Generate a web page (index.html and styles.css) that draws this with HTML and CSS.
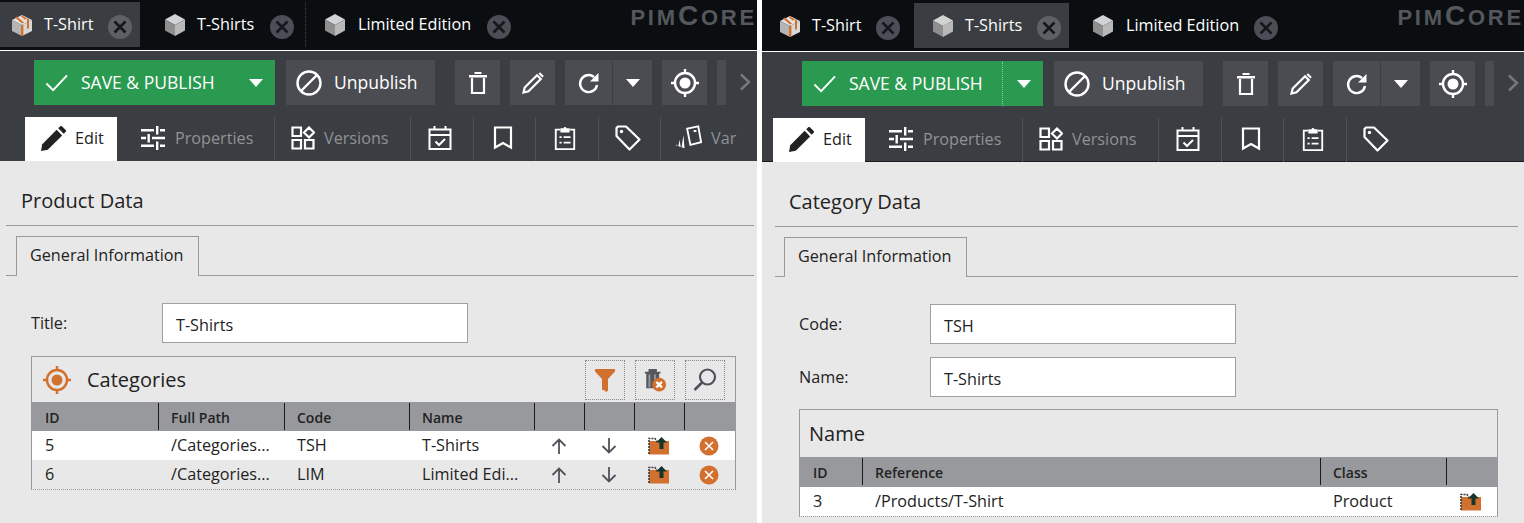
FILE: index.html
```html
<!DOCTYPE html>
<html>
<head>
  <title>Pimcore - Product and Category</title>
  <link rel="stylesheet" href="styles.css">
</head>
<body>
  <svg class="icon-defs" xmlns="http://www.w3.org/2000/svg">
    <symbol id="i-cube" viewBox="0 0 24 24">
      <path fill="#d2d2d2" d="M12 1l10 5.500L12 12 2 6.500z"/>
      <path fill="#8e8e8e" d="M2 6.500L12 12v11L2 17.500z"/>
      <path fill="#b9b9b9" d="M22 6.500L12 12v11l10-5.500z"/>
    </symbol>
    <symbol id="i-gift" viewBox="0 0 24 24">
      <path fill="#e2e2e2" d="M12 2l10 5L12 12 2 7z"/>
      <path fill="#b5b5b5" d="M2 7l10 5v11L2 18z"/>
      <path fill="#d8d8d8" d="M22 7L12 12v11l10-5z"/>
      <path fill="#d2702f" d="M11 12h2.400v11H11zM5 4.500L7 3.500l7 6-2 1zM10 2.500h2l5 3-2 1.200z"/>
      <path fill="#d2702f" d="M17 5.500h2V15l-2 1z"/>
    </symbol>
    <symbol id="i-close" viewBox="0 0 24 24">
      <circle cx="12" cy="12" r="12" fill="currentColor"/>
      <path stroke="#15171a" stroke-width="2.600" d="M6.500 6.500l11 11M17.500 6.500l-11 11"/>
    </symbol>
    <symbol id="i-check" viewBox="0 0 24 24">
      <path fill="none" stroke="#fff" stroke-width="2" d="M1.500 13l7 7L23 4.500"/>
    </symbol>
    <symbol id="i-caret" viewBox="0 0 16 10">
      <path fill="#fff" d="M1 1h14L8 9z"/>
    </symbol>
    <symbol id="i-ban" viewBox="0 0 26 26">
      <circle cx="13" cy="13" r="11.500" fill="none" stroke="#fff" stroke-width="2.400"/>
      <path stroke="#fff" stroke-width="2.400" d="M21 5L5 21"/>
    </symbol>
    <symbol id="i-trash" viewBox="0 0 20 24">
      <path fill="none" stroke="#fff" stroke-width="2.200" d="M4 7v15h12V7"/>
      <path fill="#fff" d="M1 4h18v2.400H1zM6.500 1h7v2h-7z"/>
    </symbol>
    <symbol id="i-pencil" viewBox="0 0 24 24">
      <path fill="none" stroke="#fff" stroke-width="2.200" d="M2.500 21.500l1.200-5L16 4.200l3.800 3.800L7.500 20.300z"/>
      <path fill="#fff" d="M17.500 2.700l1.500-1.500 3.800 3.800-1.500 1.500z"/>
    </symbol>
    <symbol id="i-refresh" viewBox="0 0 24 24">
      <path fill="none" stroke="#fff" stroke-width="2.400" d="M20 14a8.500 8.500 0 1 1-3-8"/>
      <path fill="#fff" d="M21.500 2v8.500H13z"/>
    </symbol>
    <symbol id="i-locate" viewBox="0 0 28 28">
      <circle cx="14" cy="14" r="10" fill="none" stroke="currentColor" stroke-width="2.400"/>
      <circle cx="14" cy="14" r="5.500" fill="currentColor"/>
      <path stroke="currentColor" stroke-width="2.400" d="M14 0v5M14 23v5M0 14h5M23 14h5"/>
    </symbol>
    <symbol id="i-chevron" viewBox="0 0 12 18">
      <path fill="none" stroke="#77797d" stroke-width="2.400" d="M2 1.500L10 9l-8 7.500"/>
    </symbol>
    <symbol id="i-edit" viewBox="0 0 24 24">
      <path fill="currentColor" d="M0 24l1.200-6.500L15 3.700l5.300 5.300L6.500 22.800z"/>
      <path fill="currentColor" d="M16.500 2.200L18.500.300a1.200 1.200 0 0 1 1.600 0l3.600 3.600a1.200 1.200 0 0 1 0 1.600l-1.900 2z"/>
    </symbol>
    <symbol id="i-sliders" viewBox="0 0 24 24">
      <path fill="#fff" d="M0 3h13v2.400H0zM19 3h5v2.400h-5zM15 0h2.400v8.500H15zM0 10.800h5v2.400H0zM11 10.800h13v2.400H11zM6.500 8h2.400v8.400H6.500zM0 18.600h13V21H0zM19 18.600h5V21h-5zM15 15.500h2.400V24H15z"/>
    </symbol>
    <symbol id="i-shapes" viewBox="0 0 24 24">
      <path fill="none" stroke="#fff" stroke-width="2.200" d="M1.500 1.500h8.500V10H1.500zM1.500 14h8.500v8.500H1.500zM14 14h8.500v8.500H14zM18 1.500L23 6.500l-5 5-5-5z"/>
    </symbol>
    <symbol id="i-calendar" viewBox="0 0 24 24">
      <path fill="none" stroke="#fff" stroke-width="2" d="M1.500 3.500h21v19.500h-21zM1.500 9h21M6.500 0v4M17.500 0v4M7.500 15.500l3.500 3.500 6-6"/>
    </symbol>
    <symbol id="i-bookmark" viewBox="0 0 20 24">
      <path fill="none" stroke="#fff" stroke-width="2.200" d="M2 1.500h16v20l-8-4.500-8 4.500z"/>
    </symbol>
    <symbol id="i-clipboard" viewBox="0 0 24 26">
      <path fill="none" stroke="#fff" stroke-width="2" d="M7 4H2v21h20V4h-5"/>
      <path fill="#fff" d="M7 2.500h3.500a1.500 1.500 0 0 1 3 0H17V7H7zM6 11h2.400v2H6zM10.500 11H18v2h-7.500zM6 17h2.400v2H6zM10.500 17H18v2h-7.500z"/>
    </symbol>
    <symbol id="i-tag" viewBox="0 0 26 26">
      <path fill="none" stroke="#fff" stroke-width="2.200" stroke-linejoin="round" d="M1.500 3v8l13 13.500L24.500 14.500 11 1.500H3z"/>
      <circle cx="6.500" cy="6.500" r="1.700" fill="#fff"/>
    </symbol>
    <symbol id="i-cards" viewBox="0 0 28 26">
      <path fill="none" stroke="#fff" stroke-width="2" d="M12 3l12-2.500 3 17-11.500 3z"/>
      <path fill="#fff" d="M8 10l1.200 14L6 23zM4 15l1 8-2.500-1.500zM1 20l.6 1.500L0 21zM19 4.500h3v2h-3z"/>
    </symbol>
    <symbol id="i-filter" viewBox="0 0 22 24">
      <path fill="#d2702f" d="M1 1h20v2.500l-7 7.500v11a1.800 1.800 0 0 1-3.600 0H8V11L1 3.500z"/>
    </symbol>
    <symbol id="i-trash-x" viewBox="0 0 26 26">
      <path fill="#55585f" d="M2 4h17v2H2zM6 1h9v3H6zM3.500 6h14v16h-14z"/>
      <path fill="#9a9a9a" d="M6 7h2v14H6zM12 7h2v14h-2z"/>
      <circle cx="17.500" cy="18" r="7.500" fill="#d2702f"/>
      <path stroke="#fff" stroke-width="2.400" d="M14.500 15l6 6M20.500 15l-6 6"/>
    </symbol>
    <symbol id="i-search" viewBox="0 0 24 24">
      <circle cx="14.500" cy="9" r="7.500" fill="none" stroke="#4f525a" stroke-width="2.200"/>
      <path stroke="#4f525a" stroke-width="2.600" d="M9 14.500L1.500 22"/>
    </symbol>
    <symbol id="i-up" viewBox="0 0 16 16">
      <path fill="none" stroke="#4f525a" stroke-width="1.800" d="M8 16V1.500M1.500 8L8 1.500 14.500 8"/>
    </symbol>
    <symbol id="i-down" viewBox="0 0 16 16">
      <path fill="none" stroke="#4f525a" stroke-width="1.800" d="M8 0v14.500M1.500 8L8 14.500 14.500 8"/>
    </symbol>
    <symbol id="i-folder" viewBox="0 0 22 18">
      <path fill="#d2702f" d="M1 4h20v13.500H1z"/>
      <path fill="none" stroke="#3b3b3b" stroke-width="1.600" stroke-dasharray="2 1" d="M1 17V1.500h6l2 3"/>
      <path fill="#16352a" d="M13.500 0l5.500 5.500h-3.500V12h-4V5.500H8z"/>
    </symbol>
    <symbol id="i-remove" viewBox="0 0 20 20">
      <circle cx="10" cy="10" r="9.500" fill="#d2702f"/>
      <path stroke="#fff" stroke-width="1.600" d="M6 6l8 8M14 6l-8 8"/>
    </symbol>
  </svg>

  <div class="panels">
    <!-- product -->
    <div class="panel panel-left">
      <div class="topbar">
        <div class="tab tab-a active">
          <svg class="tab-icon"><use href="#i-gift"/></svg>
          <span>T-Shirt</span>
          <svg class="tab-close"><use href="#i-close"/></svg>
        </div>
        <div class="tab tab-b dotted">
          <svg class="tab-icon"><use href="#i-cube"/></svg>
          <span>T-Shirts</span>
          <svg class="tab-close"><use href="#i-close"/></svg>
        </div>
        <div class="tab tab-c">
          <svg class="tab-icon"><use href="#i-cube"/></svg>
          <span>Limited Edition</span>
          <svg class="tab-close"><use href="#i-close"/></svg>
        </div>
        <div class="logo">PIM<span class="logo-c">C</span>ORE</div>
      </div>

      <div class="toolbar">
        <div class="actions">
          <div class="btn btn-save">
            <svg class="ico-check"><use href="#i-check"/></svg>
            <span class="btn-label">SAVE &amp; PUBLISH</span>
            <svg class="ico-caret save-caret"><use href="#i-caret"/></svg>
          </div>
          <div class="btn btn-unpublish">
            <svg class="ico-ban"><use href="#i-ban"/></svg>
            <span class="btn-label">Unpublish</span>
          </div>
          <div class="btn btn-icon first-icon"><svg class="ico-trash"><use href="#i-trash"/></svg></div>
          <div class="btn btn-icon"><svg class="ico-24"><use href="#i-pencil"/></svg></div>
          <div class="btn btn-refresh"><svg class="ico-24"><use href="#i-refresh"/></svg></div>
          <div class="btn btn-more"><svg class="ico-caret"><use href="#i-caret"/></svg></div>
          <div class="btn btn-icon"><svg class="ico-locate"><use href="#i-locate"/></svg></div>
          <div class="btn btn-stub"></div>
          <svg class="ico-chevron"><use href="#i-chevron"/></svg>
        </div>
        <div class="subtabs">
          <div class="subtab subtab-edit"><svg class="ico-edit"><use href="#i-edit"/></svg><span>Edit</span></div>
          <div class="subtab subtab-props"><svg class="ico-24"><use href="#i-sliders"/></svg><span>Properties</span></div>
          <div class="subtab subtab-versions"><svg class="ico-24"><use href="#i-shapes"/></svg><span>Versions</span></div>
          <div class="subtab subtab-only sep"><svg class="ico-24"><use href="#i-calendar"/></svg></div>
          <div class="subtab subtab-only sep"><svg class="ico-24"><use href="#i-bookmark"/></svg></div>
          <div class="subtab subtab-only sep"><svg class="ico-24"><use href="#i-clipboard"/></svg></div>
          <div class="subtab subtab-only sep"><svg class="ico-26"><use href="#i-tag"/></svg></div>
          <div class="subtab subtab-var"><svg class="ico-26"><use href="#i-cards"/></svg><span>Var</span></div>
        </div>
      </div>

      <div class="content">
        <div class="section-title">Product Data</div>
        <div class="form-tabs"><div class="form-tab">General Information</div></div>
        <div class="form-body">
          <div class="field">
            <label>Title:</label>
            <div class="input">T-Shirts</div>
          </div>
          <div class="relation relation-product">
            <div class="relation-head">
              <svg class="ico-locate head-locate"><use href="#i-locate"/></svg>
              <span class="relation-title">Categories</span>
              <div class="head-tools">
                <div class="head-tool"><svg class="ico-tool"><use href="#i-filter"/></svg></div>
                <div class="head-tool"><svg class="ico-tool"><use href="#i-trash-x"/></svg></div>
                <div class="head-tool"><svg class="ico-tool"><use href="#i-search"/></svg></div>
              </div>
            </div>
            <div class="grid-row grid-header">
              <div class="cell">ID</div><div class="cell">Full Path</div><div class="cell">Code</div><div class="cell">Name</div>
              <div class="cell"></div><div class="cell"></div><div class="cell"></div><div class="cell"></div>
            </div>
            <div class="grid-row row-white">
              <div class="cell">5</div><div class="cell">/Categories...</div><div class="cell">TSH</div><div class="cell">T-Shirts</div>
              <div class="cell cell-icon"><svg class="ico-arrow"><use href="#i-up"/></svg></div>
              <div class="cell cell-icon"><svg class="ico-arrow"><use href="#i-down"/></svg></div>
              <div class="cell cell-icon"><svg class="ico-folder"><use href="#i-folder"/></svg></div>
              <div class="cell cell-icon"><svg class="ico-remove"><use href="#i-remove"/></svg></div>
            </div>
            <div class="grid-row">
              <div class="cell">6</div><div class="cell">/Categories...</div><div class="cell">LIM</div><div class="cell">Limited Edi...</div>
              <div class="cell cell-icon"><svg class="ico-arrow"><use href="#i-up"/></svg></div>
              <div class="cell cell-icon"><svg class="ico-arrow"><use href="#i-down"/></svg></div>
              <div class="cell cell-icon"><svg class="ico-folder"><use href="#i-folder"/></svg></div>
              <div class="cell cell-icon"><svg class="ico-remove"><use href="#i-remove"/></svg></div>
            </div>
          </div>
        </div>
      </div>
    </div>

    <!-- category -->
    <div class="panel panel-right">
      <div class="topbar">
        <div class="tab tab-a">
          <svg class="tab-icon"><use href="#i-gift"/></svg>
          <span>T-Shirt</span>
          <svg class="tab-close"><use href="#i-close"/></svg>
        </div>
        <div class="tab tab-b active">
          <svg class="tab-icon"><use href="#i-cube"/></svg>
          <span>T-Shirts</span>
          <svg class="tab-close"><use href="#i-close"/></svg>
        </div>
        <div class="tab tab-c">
          <svg class="tab-icon"><use href="#i-cube"/></svg>
          <span>Limited Edition</span>
          <svg class="tab-close"><use href="#i-close"/></svg>
        </div>
        <div class="logo">PIM<span class="logo-c">C</span>ORE</div>
      </div>

      <div class="toolbar">
        <div class="actions">
          <div class="btn btn-save">
            <svg class="ico-check"><use href="#i-check"/></svg>
            <span class="btn-label">SAVE &amp; PUBLISH</span>
            <svg class="ico-caret save-caret"><use href="#i-caret"/></svg>
          </div>
          <div class="btn btn-unpublish">
            <svg class="ico-ban"><use href="#i-ban"/></svg>
            <span class="btn-label">Unpublish</span>
          </div>
          <div class="btn btn-icon first-icon"><svg class="ico-trash"><use href="#i-trash"/></svg></div>
          <div class="btn btn-icon"><svg class="ico-24"><use href="#i-pencil"/></svg></div>
          <div class="btn btn-refresh"><svg class="ico-24"><use href="#i-refresh"/></svg></div>
          <div class="btn btn-more"><svg class="ico-caret"><use href="#i-caret"/></svg></div>
          <div class="btn btn-icon"><svg class="ico-locate"><use href="#i-locate"/></svg></div>
          <div class="btn btn-stub"></div>
          <svg class="ico-chevron"><use href="#i-chevron"/></svg>
        </div>
        <div class="subtabs">
          <div class="subtab subtab-edit"><svg class="ico-edit"><use href="#i-edit"/></svg><span>Edit</span></div>
          <div class="subtab subtab-props"><svg class="ico-24"><use href="#i-sliders"/></svg><span>Properties</span></div>
          <div class="subtab subtab-versions"><svg class="ico-24"><use href="#i-shapes"/></svg><span>Versions</span></div>
          <div class="subtab subtab-only sep"><svg class="ico-24"><use href="#i-calendar"/></svg></div>
          <div class="subtab subtab-only sep"><svg class="ico-24"><use href="#i-bookmark"/></svg></div>
          <div class="subtab subtab-only sep"><svg class="ico-24"><use href="#i-clipboard"/></svg></div>
          <div class="subtab subtab-only"><svg class="ico-26"><use href="#i-tag"/></svg></div>
        </div>
      </div>

      <div class="content">
        <div class="section-title">Category Data</div>
        <div class="form-tabs"><div class="form-tab">General Information</div></div>
        <div class="form-body">
          <div class="field">
            <label>Code:</label>
            <div class="input">TSH</div>
          </div>
          <div class="field field-last">
            <label>Name:</label>
            <div class="input">T-Shirts</div>
          </div>
          <div class="relation relation-category">
            <div class="relation-head">
              <span class="relation-title">Name</span>
            </div>
            <div class="grid-row grid-header">
              <div class="cell">ID</div><div class="cell">Reference</div><div class="cell">Class</div><div class="cell"></div>
            </div>
            <div class="grid-row row-white">
              <div class="cell">3</div><div class="cell">/Products/T-Shirt</div><div class="cell">Product</div>
              <div class="cell cell-icon"><svg class="ico-folder"><use href="#i-folder"/></svg></div>
            </div>
          </div>
        </div>
      </div>
    </div>
  </div>
</body>
</html>
```

FILE: styles.css
```css
html, body {
  height: 523px;
  margin: 0;
  overflow: hidden;
}

body {
  background-color: #fff;
  color: #222;
  font-family: "Open Sans", sans-serif;
  font-size: 16.200px;
}

.icon-defs {
  display: none;
}

svg {
  display: block;
  flex: none;
}

.panels {
  display: flex;
  gap: 5px;
  height: 523px;
}

.panel {
  display: flex;
  flex-direction: column;
  overflow: hidden;
}

.panel-left {
  width: 757px;
}

.panel-right {
  flex: 1;
}

/* top tabs */
.topbar {
  display: flex;
  flex: none;
  height: 50px;
  background-color: #0b0e11;
  border-bottom: 1px solid #fff;
  color: #fff;
}

.panel-right .topbar {
  height: 51px;
  padding-left: 6px;
}

.tab {
  display: flex;
  align-items: center;
  box-sizing: border-box;
  height: 45px;
  margin-top: 2px;
  color: #4b4e56;
}

.panel-right .tab {
  margin-top: 3px;
}

.tab span {
  margin-bottom: 2px;
  color: #fff;
}

.tab.active {
  background-color: #3a3d41;
  color: #5d6065;
}

.tab.dotted {
  border-right: 1px dotted #3d4045;
}

.tab-icon {
  width: 24px;
  height: 28px;
  margin-right: 10px;
}

.tab-c .tab-icon {
  margin-right: 11px;
}

.tab-close {
  width: 24px;
  height: 24px;
  margin-top: 5px;
  margin-left: auto;
}

.panel-left .tab-a {
  width: 140px;
  padding: 0 8px 0 10px;
}

.panel-left .tab-b {
  width: 166px;
  padding: 0 11px 0 23px;
}

.panel-left .tab-c {
  width: 213px;
  padding: 0 8px 0 17px;
}

.panel-right .tab-a {
  width: 146px;
  padding: 0 14px 0 10px;
}

.panel-right .tab-b {
  width: 155px;
  padding: 0 8px 0 17px;
}

.panel-right .tab-c {
  width: 217px;
  padding: 0 8px 0 22px;
}

.logo {
  flex: none;
  margin-top: 3px;
  margin-left: auto;
  color: #55575c;
  font-family: "Liberation Sans", sans-serif;
  font-size: 22px;
  font-weight: bold;
  letter-spacing: 2.800px;
  line-height: 30px;
  white-space: nowrap;
}

.logo-c {
  font-size: 28px;
  line-height: 20px;
}

/* dark toolbar */
.toolbar {
  flex: none;
  height: 110px;
  background-color: #3a3d41;
  color: #fff;
}

.panel-right .toolbar {
  border-bottom: 1px solid #1a1c1f;
  height: 109px;
}

.actions {
  display: flex;
  height: 45px;
  padding-top: 9px;
  padding-left: 34px;
}

.panel-right .actions {
  padding-left: 40px;
}

.btn {
  display: flex;
  align-items: center;
  justify-content: center;
  box-sizing: border-box;
  width: 45px;
  height: 45px;
  margin-left: 10px;
  background-color: #4a4c52;
}

.btn-label {
  margin-bottom: 2px;
  font-size: 17.500px;
}

.btn-save {
  justify-content: flex-start;
  width: 241px;
  margin-left: 0;
  padding-left: 11px;
  background-color: #2a9a50;
}

.panel-right .save-caret {
  border-left: 1px dotted #8ac79f;
  box-sizing: content-box;
  padding: 17px 11px 17px 13px;
  margin-left: 19px;
}

.ico-check {
  width: 23px;
  height: 23px;
  margin-right: 13px;
}

.save-caret {
  margin-left: 33px;
}

.ico-caret {
  width: 16px;
  height: 10px;
}

.btn-unpublish {
  justify-content: flex-start;
  width: 149px;
  margin-left: 11px;
  padding-left: 10px;
}

.ico-ban {
  width: 26px;
  height: 26px;
  margin-right: 12px;
}

.first-icon {
  margin-left: 20px;
}

.btn-refresh {
  width: 47px;
}

.btn-more {
  width: 40px;
  margin-left: 0;
  border-left: 1px solid #3a3d41;
}

.btn-stub {
  width: 9px;
}

.ico-trash {
  width: 20px;
  height: 24px;
}

.ico-24 {
  width: 24px;
  height: 24px;
}

.ico-26 {
  width: 26px;
  height: 26px;
}

.ico-locate {
  width: 28px;
  height: 28px;
  color: #fff;
}

.ico-chevron {
  width: 12px;
  height: 18px;
  margin: 13px 0 0 13px;
}

.subtabs {
  display: flex;
  height: 44px;
  margin-top: 12px;
  padding-left: 25px;
}

.panel-right .subtabs {
  padding-left: 11px;
}

.subtab {
  display: flex;
  align-items: center;
  box-sizing: border-box;
  height: 44px;
  padding-bottom: 2px;
  color: #909296;
}

.subtab-edit {
  width: 92px;
  padding-left: 16px;
  background-color: #fff;
  color: #222;
}

.ico-edit {
  width: 25px;
  height: 25px;
  margin-right: 9px;
}

.subtab-props {
  width: 158px;
  padding-left: 24px;
  border-right: 1px solid #4f5257;
}

.subtab-props svg {
  margin-right: 10px;
}

.subtab-versions {
  width: 136px;
  padding-left: 16px;
  border-right: 1px solid #4f5257;
}

.subtab-versions svg {
  margin-right: 9px;
}

.subtab-only {
  justify-content: center;
  width: 62.500px;
  padding-right: 3px;
}

.subtab-only.sep {
  border-right: 1px solid #4f5257;
}

.subtab-var {
  padding-left: 15px;
}

.subtab-var svg {
  margin-right: 9px;
}

/* page body */
.content {
  flex: 1;
  padding: 0 3px 0 6px;
  background-color: #e8e8e8;
}

.panel-right .content {
  padding-left: 13px;
  padding-right: 6px;
}

.section-title {
  box-sizing: border-box;
  height: 65px;
  padding: 26px 0 0 15px;
  border-bottom: 1px solid #9a9a9a;
  font-size: 20px;
  line-height: 28px;
}

.panel-right .section-title {
  padding-left: 14px;
}

.form-tabs {
  display: flex;
  height: 39px;
  margin-top: 10px;
  padding-left: 10px;
  border-bottom: 1px solid #9a9a9a;
}

.panel-right .form-tabs {
  padding-left: 9px;
}

.form-tab {
  box-sizing: border-box;
  width: 183px;
  height: 40px;
  padding-left: 13px;
  border: 1px solid #9a9a9a;
  border-bottom: none;
  background-color: #e8e8e8;
  line-height: 37px;
}

.form-body {
  padding: 27px 0 0 25px;
}

.panel-right .form-body {
  padding-left: 24px;
}

.field {
  display: flex;
  height: 40px;
  margin-bottom: 13px;
}

.field-last {
  margin-bottom: 12px;
}

.field label {
  flex: none;
  width: 131px;
  line-height: 40px;
}

.input {
  box-sizing: border-box;
  width: 306px;
  height: 40px;
  padding: 1px 0 0 13px;
  border: 1px solid #a0a0a0;
  background-color: #fff;
  line-height: 40px;
}

.relation {
  box-sizing: border-box;
  border: 1px solid #9a9a9a;
  border-bottom-style: dotted;
}

.relation-product {
  width: 705px;
}

.relation-category {
  width: 699px;
}

.relation-head {
  display: flex;
  align-items: center;
  box-sizing: border-box;
  height: 45px;
  padding: 0 10px 0 11px;
}

.relation-category .relation-head {
  height: 47px;
  padding-left: 9px;
}

.relation-title {
  margin-bottom: 1px;
  font-size: 20px;
}

.head-locate {
  margin-right: 16px;
  color: #d2702f;
}

.head-tools {
  display: flex;
  gap: 10px;
  margin-left: auto;
}

.head-tool {
  display: flex;
  align-items: center;
  justify-content: center;
  width: 38px;
  height: 38px;
  border: 1px dotted #8a8a8a;
}

.ico-tool {
  width: 24px;
  height: 24px;
}

.grid-row {
  display: grid;
  height: 29px;
  line-height: 29px;
}

.relation-product .grid-row {
  grid-template-columns: 127px 126px 125px 125px 50px 50px 50px 1fr;
}

.relation-category .grid-row {
  grid-template-columns: 63px 458px 126px 1fr;
}

.relation-category .grid-header {
  height: 30px;
}

.cell {
  box-sizing: border-box;
  padding-left: 12px;
  white-space: nowrap;
  overflow: hidden;
}

.cell:first-child {
  padding-left: 13px;
}

.grid-header {
  background-color: #98999d;
  font-size: 14px;
  font-weight: 600;
}

.grid-header .cell:not(:last-child) {
  height: 27px;
  margin-top: 1px;
  border-right: 1px solid #1a1a1a;
}

.row-white {
  background-color: #fff;
}

.cell-icon {
  display: flex;
  align-items: center;
  justify-content: center;
  padding-left: 0;
  padding-right: 3px;
}

.ico-arrow {
  width: 16px;
  height: 16px;
}

.ico-folder {
  width: 22px;
  height: 18px;
}

.ico-remove {
  width: 20px;
  height: 20px;
}
```
